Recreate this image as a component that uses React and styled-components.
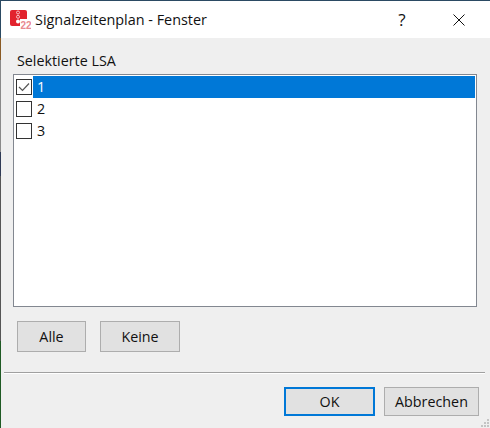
import React from "react";
import styled, { createGlobalStyle } from "styled-components";

const GlobalStyle = createGlobalStyle`
  html, body {
    margin: 0;
    padding: 0;
    background: #efefef;
  }
  * {
    box-sizing: border-box;
  }
`;

// the 1px strip on the left is the desktop showing past the window edge
const Dialog = styled.div`
  position: relative;
  width: 490px;
  height: 428px;
  display: flex;
  flex-direction: column;
  overflow: hidden;
  padding-left: 1px;
  border-top: 1px solid #2b4a63;
  background: linear-gradient(
      #2b4a63 0 37px,
      #8a5a24 37px 59px,
      #8a8a8a 59px 151px,
      #2f3a55 151px 175px,
      #555 175px 340px,
      #1f5a24 340px
    )
    left top / 1px 100% no-repeat #efefef;
  font-family: "Open Sans", "Noto Sans", sans-serif;
  font-size: 14.3px;
  color: #111;
`;

const TitleBar = styled.div`
  height: 37px;
  flex: none;
  display: flex;
  align-items: center;
  background: #fff;
  padding-left: 9px;
`;

const TitleText = styled.span`
  margin-left: 4px;
  flex: 1;
  font-size: 14.4px;
`;

const HelpButton = styled.span`
  width: 46px;
  margin-right: 11px;
  text-align: center;
  font-size: 17px;
`;

const CloseButton = styled.span`
  width: 46px;
  margin-right: 8px;
  display: flex;
  justify-content: center;
`;

const Body = styled.div`
  flex: 1;
  display: flex;
  flex-direction: column;
  padding: 13px 13px 0 12px;
`;

const Label = styled.div`
  line-height: 19px;
  margin-left: 4px;
  margin-bottom: 4px;
`;

const List = styled.div`
  height: 233px;
  background: #fff;
  border: 1px solid #828790;
  padding: 1px;
`;

const Row = styled.div`
  height: 22px;
  display: flex;
  align-items: center;
`;

const Check = styled.span`
  width: 16px;
  height: 16px;
  margin: 0 1px;
  flex: none;
  background: #fff;
  border: 1px solid #333;
  display: flex;
  align-items: center;
  justify-content: center;
`;

const RowLabel = styled.span`
  flex: 1;
  height: 22px;
  line-height: 22px;
  padding-left: 4px;
  background: ${(props) => (props.$selected ? "#0078d7" : "transparent")};
  color: ${(props) => (props.$selected ? "#fff" : "#111")};
`;

const ButtonRow = styled.div`
  display: flex;
  gap: 14px;
  margin: 14px 0 0 4px;
`;

const Button = styled.button`
  width: ${(props) => props.$width}px;
  height: ${(props) => props.$height}px;
  padding: 0;
  background: #e1e1e1;
  border: ${(props) => (props.$primary ? "2px solid #0078d7" : "1px solid #adadad")};
  font: inherit;
  color: #111;
`;

const Divider = styled.div`
  height: 2px;
  margin: 20px -8px 0 -9px;
  border-top: 1px solid #a0a0a0;
  border-bottom: 1px solid #fff;
`;

const Footer = styled.div`
  display: flex;
  justify-content: flex-end;
  gap: 9px;
  margin: 13px -2px 0 0;
`;

const Grip = styled.svg`
  position: absolute;
  right: 0;
  bottom: 0;
`;

const AppIcon = () => (
  <svg width="21" height="19" viewBox="0 0 21 19">
    <rect x="0" y="0" width="17" height="16" rx="2" fill="#e2232e" />
    <circle cx="8" cy="2.5" r="1.5" fill="none" stroke="#f7c0c4" />
    <circle cx="8" cy="6.8" r="1.5" fill="none" stroke="#f7c0c4" />
    <circle cx="8" cy="11.6" r="2" fill="#fff" />
    <rect x="10" y="9" width="11" height="10" fill="#fff" />
    <text x="10.5" y="18.5" fontSize="10" fontWeight="700" fontFamily="Liberation Sans, sans-serif" fill="#e98a90">22</text>
  </svg>
);

const CloseIcon = () => (
  <svg width="12" height="12" viewBox="0 0 12 12">
    <path d="M0.5 0.5 L11.5 11.5 M11.5 0.5 L0.5 11.5" stroke="#111" strokeWidth="1" fill="none" />
  </svg>
);

const CheckMark = () => (
  <svg width="12" height="10" viewBox="0 0 12 10">
    <path d="M1 5 L4.5 8.5 L11 1.5" stroke="#555" strokeWidth="1.2" fill="none" />
  </svg>
);

const ITEMS = [
  { id: 1, checked: true },
  { id: 2, checked: false },
  { id: 3, checked: false },
];

const App = () => (
  <Dialog>
    <GlobalStyle />
    <TitleBar>
      <AppIcon />
      <TitleText>Signalzeitenplan - Fenster</TitleText>
      <HelpButton>?</HelpButton>
      <CloseButton>
        <CloseIcon />
      </CloseButton>
    </TitleBar>
    <Body>
      <Label>Selektierte LSA</Label>
      <List>
        {ITEMS.map((item) => (
          <Row key={item.id}>
            <Check>{item.checked && <CheckMark />}</Check>
            <RowLabel $selected={item.checked}>{item.id}</RowLabel>
          </Row>
        ))}
      </List>
      <ButtonRow>
        <Button $width={69} $height={31}>Alle</Button>
        <Button $width={80} $height={31}>Keine</Button>
      </ButtonRow>
      <Divider />
      <Footer>
        <Button $width={91} $height={29} $primary>OK</Button>
        <Button $width={95} $height={29}>Abbrechen</Button>
      </Footer>
    </Body>
    <Grip width="12" height="12" viewBox="0 0 12 12" fill="#c4c4c4">
      <rect x="9" y="3" width="2" height="2" />
      <rect x="6" y="6" width="2" height="2" />
      <rect x="9" y="6" width="2" height="2" />
      <rect x="3" y="9" width="2" height="2" />
      <rect x="6" y="9" width="2" height="2" />
      <rect x="9" y="9" width="2" height="2" />
    </Grip>
  </Dialog>
);

export default App;
